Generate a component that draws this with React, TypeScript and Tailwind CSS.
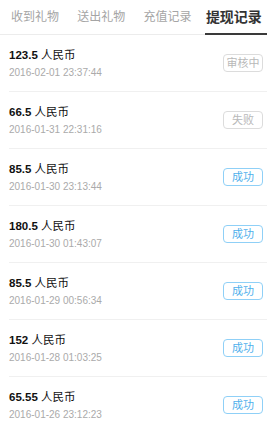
import React from "react";

type Status = "pending" | "failed" | "success";

interface Record {
  amount: string;
  time: string;
  status: Status;
}

const tabs = ["收到礼物", "送出礼物", "充值记录", "提现记录"];

const records: Record[] = [
  { amount: "123.5", time: "2016-02-01 23:37:44", status: "pending" },
  { amount: "66.5", time: "2016-01-31 22:31:16", status: "failed" },
  { amount: "85.5", time: "2016-01-30 23:13:44", status: "success" },
  { amount: "180.5", time: "2016-01-30 01:43:07", status: "success" },
  { amount: "85.5", time: "2016-01-29 00:56:34", status: "success" },
  { amount: "152", time: "2016-01-28 01:03:25", status: "success" },
  { amount: "65.55", time: "2016-01-26 23:12:23", status: "success" },
];

const StatusBadge = ({ status }: { status: Status }) => {
  if (status === "success") {
    return (
      <span className="flex h-[18px] w-[40px] items-center justify-center rounded-[4px] border border-[#8fd0f7] text-[11px] text-[#4fb0ec]">
        成功
      </span>
    );
  }
  return (
    <span className="flex h-[18px] w-[40px] items-center justify-center rounded-[4px] border border-[#dcdcdc] text-[11px] text-[#b8b8b8]">
      {status === "pending" ? "审核中" : "失败"}
    </span>
  );
};

const App = () => {
  return (
    <div className="min-h-screen bg-white font-['Liberation_Sans','Noto_Sans_CJK_SC',sans-serif]">
      {/* tabs */}
      <div className="flex h-[35px] border-b border-[#ececec] pl-[2px]">
        {tabs.map((tab, index) => {
          const active = index === tabs.length - 1;
          return (
            <div key={tab} className={`relative flex flex-1 items-center justify-center ${active ? "text-[14px] font-bold text-[#333]" : "text-[12px] text-[#a5a5a5]"}`}>
              {tab}
              {active && <span className="absolute -bottom-px left-1 right-0 h-[2px] bg-[#3a3a3a]" />}
            </div>
          );
        })}
      </div>

      {/* list */}
      <div>
        {records.map((r, index) => (
          <div key={index} className="ml-[9px] flex h-[57px] items-center justify-between border-b border-[#f0f0f0] pr-[4px]">
            <div className="flex flex-col">
              <p className="h-[16px] text-[11.5px] leading-[16px] text-[#111]">
                <span className="font-bold">{r.amount}</span> 人民币
              </p>
              <p className="mt-[3px] h-[14px] text-[10px] leading-[14px] text-[#aaaaaa]">{r.time}</p>
            </div>
            <StatusBadge status={r.status} />
          </div>
        ))}
      </div>
    </div>
  );
};

export default App;
